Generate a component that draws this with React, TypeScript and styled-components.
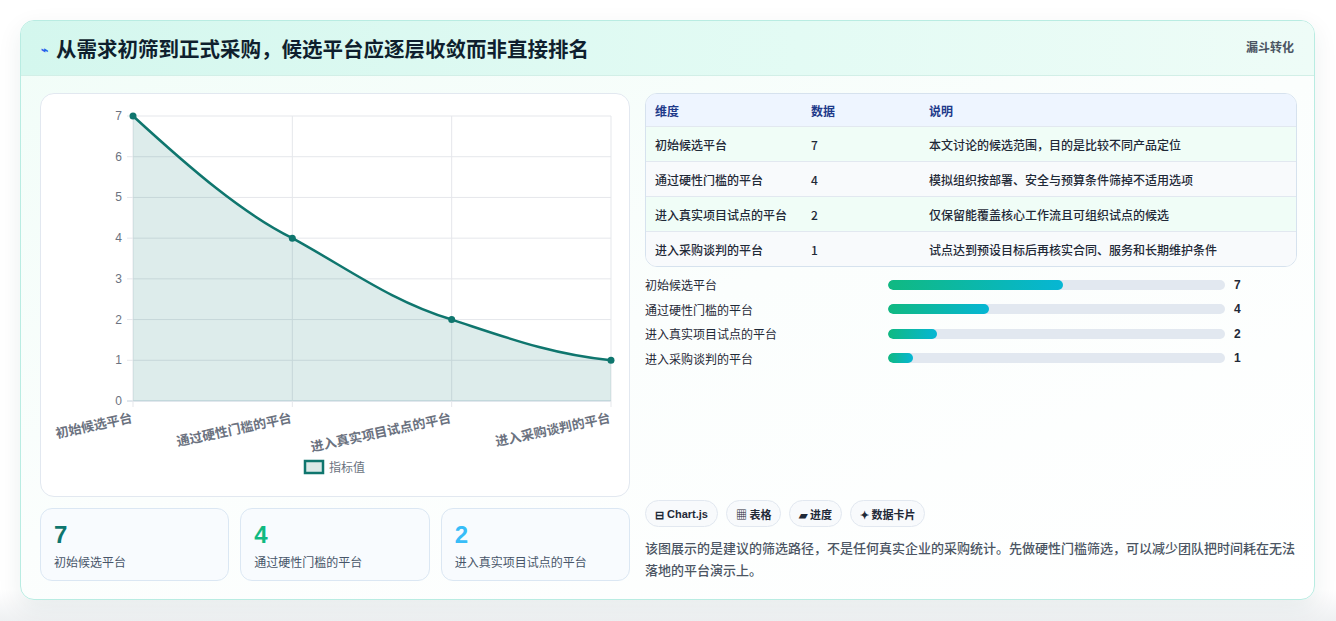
import React from "react";
import styled, { createGlobalStyle } from "styled-components";

const Global = createGlobalStyle`
  body { margin: 0; background: #fff; font-family: "Noto Sans CJK SC", "Liberation Sans", sans-serif; }
`;
const Page = styled.div`
  padding: 20px 21px 22px 20px; height: 621px; box-sizing: border-box;
  background: linear-gradient(#fff 95%, #eef0f2);
`;
const Card = styled.div`
  height: 580px; box-sizing: border-box; border: 1px solid #b9ece2; border-radius: 14px; overflow: hidden;
  background: linear-gradient(160deg, #f1fdf8 0%, #fbfefd 50%, #fff 100%);
  box-shadow: 0 8px 24px rgba(15, 60, 60, 0.08); display: flex; flex-direction: column;
`;
const Header = styled.div`
  height: 55px; flex: none; display: flex; align-items: center; justify-content: space-between;
  padding: 0 20px 0 20px; background: linear-gradient(90deg, #d4f7ee, #e3fbf4 60%, #eefcf7);
  border-bottom: 1px solid #d2efe7; box-sizing: border-box;
`;
const Title = styled.h1`
  margin: 0; font-size: 20.5px; font-weight: 700; color: #0f1f2e; display: flex; align-items: center; gap: 8px;
`;
const Tag = styled.span`font-size: 12px; font-weight: 700; color: #4b5563; align-self: flex-start; margin-top: 17px;`;
const Body = styled.div`flex: 1; display: grid; grid-template-columns: 590px 652px; gap: 15px; padding: 17px 18px 18px 19px;`;
const Col = styled.div`display: flex; flex-direction: column; gap: 11px;`;
const ChartCard = styled.div`
  height: 404px; box-sizing: border-box; background: #fff; border: 1px solid #e2e8f0; border-radius: 14px;
`;
const Stats = styled.div`display: grid; grid-template-columns: repeat(3, 1fr); gap: 11px;`;
const Stat = styled.div`
  height: 73px; box-sizing: border-box; border: 1px solid #dbe7f3; border-radius: 12px; background: #f8fbfe;
  padding: 12px 13px;
`;
const StatNum = styled.div<{ $c: string }>`font-family: "Liberation Sans", sans-serif; font-size: 24px; font-weight: 700; color: ${p => p.$c}; line-height: 28px;`;
const StatLabel = styled.div`font-size: 12px; color: #475569; margin-top: 4px;`;
const Table = styled.div`border: 1px solid #d6e2ee; border-radius: 12px; overflow: hidden; background: #fff;`;
const Row = styled.div<{ $head?: boolean; $alt?: boolean }>`
  display: grid; grid-template-columns: 156px 118px 1fr; height: ${p => (p.$head ? 32 : 34)}px; align-items: center;
  padding-left: 9px; font-size: 12px; font-weight: ${p => (p.$head ? 700 : 500)};
  color: ${p => (p.$head ? "#1e3a8a" : "#1f2937")};
  background: ${p => (p.$head ? "#eef5ff" : p.$alt ? "#f8fafc" : "#f0fdf7")};
  border-top: ${p => (p.$head ? "none" : "1px solid #e2e8f0")};
`;
const Bars = styled.div`display: flex; flex-direction: column; gap: 7.5px; margin-top: 9px;`;
const BarRow = styled.div`display: grid; grid-template-columns: 243px 337px 1fr; align-items: center; height: 17px; font-size: 12px; color: #1f2937;`;
const Track = styled.div`height: 10px; border-radius: 5px; background: #e2e8f0; overflow: hidden;`;
const Fill = styled.div`height: 100%; border-radius: 5px; background: linear-gradient(90deg, #10b981, #06b6d4);`;
const Val = styled.span`font-family: "Liberation Sans", sans-serif; font-weight: 700; padding-left: 9px;`;
const Spacer = styled.div`flex: 1;`;
const Chips = styled.div`display: flex; gap: 8px;`;
const Chip = styled.span`
  height: 27px; box-sizing: border-box; padding: 0 9px; border: 1px solid #e2e8f0; border-radius: 14px; background: #f8fafc;
  font-size: 11px; font-weight: 700; color: #1f2937; display: flex; align-items: center; gap: 3px;
`;
const Note = styled.p`margin: 10px 0 0; font-size: 13px; line-height: 22px; color: #4b5563; font-weight: 500;`;

const labels = ["初始候选平台", "通过硬性门槛的平台", "进入真实项目试点的平台", "进入采购谈判的平台"];
const vals = [7, 4, 2, 1];
const descs = ["本文讨论的候选范围，目的是比较不同产品定位", "模拟组织按部署、安全与预算条件筛掉不适用选项", "仅保留能覆盖核心工作流且可组织试点的候选", "试点达到预设目标后再核实合同、服务和长期维护条件"];

function Chart() {
  const x0 = 92, x1 = 570, yTop = 22, yBot = 307;
  const xs = [0, 1, 2, 3].map(i => x0 + (i * (x1 - x0)) / 3);
  const y = (v: number) => yBot - (v / 7) * (yBot - yTop);
  const pts = xs.map((x, i) => [x, y(vals[i])]);
  const line = `M${pts[0][0]},${pts[0][1]} C${pts[0][0] + 60},${pts[0][1] + 55} ${pts[1][0] - 50},${pts[1][1] - 25} ${pts[1][0]},${pts[1][1]} C${pts[1][0] + 55},${pts[1][1] + 30} ${pts[2][0] - 60},${pts[2][1] - 18} ${pts[2][0]},${pts[2][1]} C${pts[2][0] + 55},${pts[2][1] + 18} ${pts[3][0] - 60},${pts[3][1] - 6} ${pts[3][0]},${pts[3][1]}`;
  return (
    <svg width="588" height="402" style={{ display: "block" }}>
      {[0, 1, 2, 3, 4, 5, 6, 7].map(v => (
        <g key={v}>
          <line x1={x0 - 6} x2={x1} y1={y(v)} y2={y(v)} stroke={v === 0 ? "#c3d0dc" : "#e5e7eb"} />
          <text x={x0 - 11} y={y(v) + 4} fontSize="12" fill="#6b7280" textAnchor="end" fontFamily="Liberation Sans">{v}</text>
        </g>
      ))}
      {xs.map((x, i) => <line key={i} x1={x} x2={x} y1={yTop} y2={yBot + 6} stroke="#e5e7eb" />)}
      <path d={`${line} L${x1},${yBot} L${x0},${yBot} Z`} fill="rgba(15,118,110,0.14)" />
      <path d={line} fill="none" stroke="#0f766e" strokeWidth="2.5" />
      {pts.map(([px, py], i) => <circle key={i} cx={px} cy={py} r="3.5" fill="#0f766e" />)}
      {labels.map((l, i) => (
        <text key={l} x={xs[i]} y={yBot + 21} fontSize="13" fontWeight="700" fill="#6b7280" textAnchor="end" transform={`rotate(-12 ${xs[i]} ${yBot + 21})`}>{l}</text>
      ))}
      <rect x="264" y="367" width="18" height="12" fill="#dbe9e7" stroke="#0f766e" strokeWidth="2.5" />
      <text x="288" y="378" fontSize="12" fill="#6b7280">指标值</text>
    </svg>
  );
}

export default function App() {
  return (
    <Page>
      <Global />
      <Card>
        <Header>
          <Title><span style={{ color: "#2563eb", fontSize: 12 }}>⌁</span>从需求初筛到正式采购，候选平台应逐层收敛而非直接排名</Title>
          <Tag>漏斗转化</Tag>
        </Header>
        <Body>
          <Col>
            <ChartCard><Chart /></ChartCard>
            <Stats>
              <Stat><StatNum $c="#0f766e">7</StatNum><StatLabel>初始候选平台</StatLabel></Stat>
              <Stat><StatNum $c="#10b981">4</StatNum><StatLabel>通过硬性门槛的平台</StatLabel></Stat>
              <Stat><StatNum $c="#38bdf8">2</StatNum><StatLabel>进入真实项目试点的平台</StatLabel></Stat>
            </Stats>
          </Col>
          <Col style={{ gap: 0 }}>
            <Table>
              <Row $head><span>维度</span><span>数据</span><span>说明</span></Row>
              {labels.map((l, i) => (
                <Row key={l} $alt={i % 2 === 1}><span>{l}</span><span>{vals[i]}</span><span>{descs[i]}</span></Row>
              ))}
            </Table>
            <Bars>
              {labels.map((l, i) => (
                <BarRow key={l}><span>{l}</span><Track><Fill style={{ width: `${[52, 30, 14.5, 7.5][i]}%` }} /></Track><Val>{vals[i]}</Val></BarRow>
              ))}
            </Bars>
            <Spacer />
            <Chips>
              <Chip>⊟ <span style={{ fontFamily: "Liberation Sans" }}>Chart.js</span></Chip>
              <Chip>▦ 表格</Chip>
              <Chip>▰ 进度</Chip>
              <Chip>✦ 数据卡片</Chip>
            </Chips>
            <Note>该图展示的是建议的筛选路径，不是任何真实企业的采购统计。先做硬性门槛筛选，可以减少团队把时间耗在无法落地的平台演示上。</Note>
          </Col>
        </Body>
      </Card>
    </Page>
  );
}
